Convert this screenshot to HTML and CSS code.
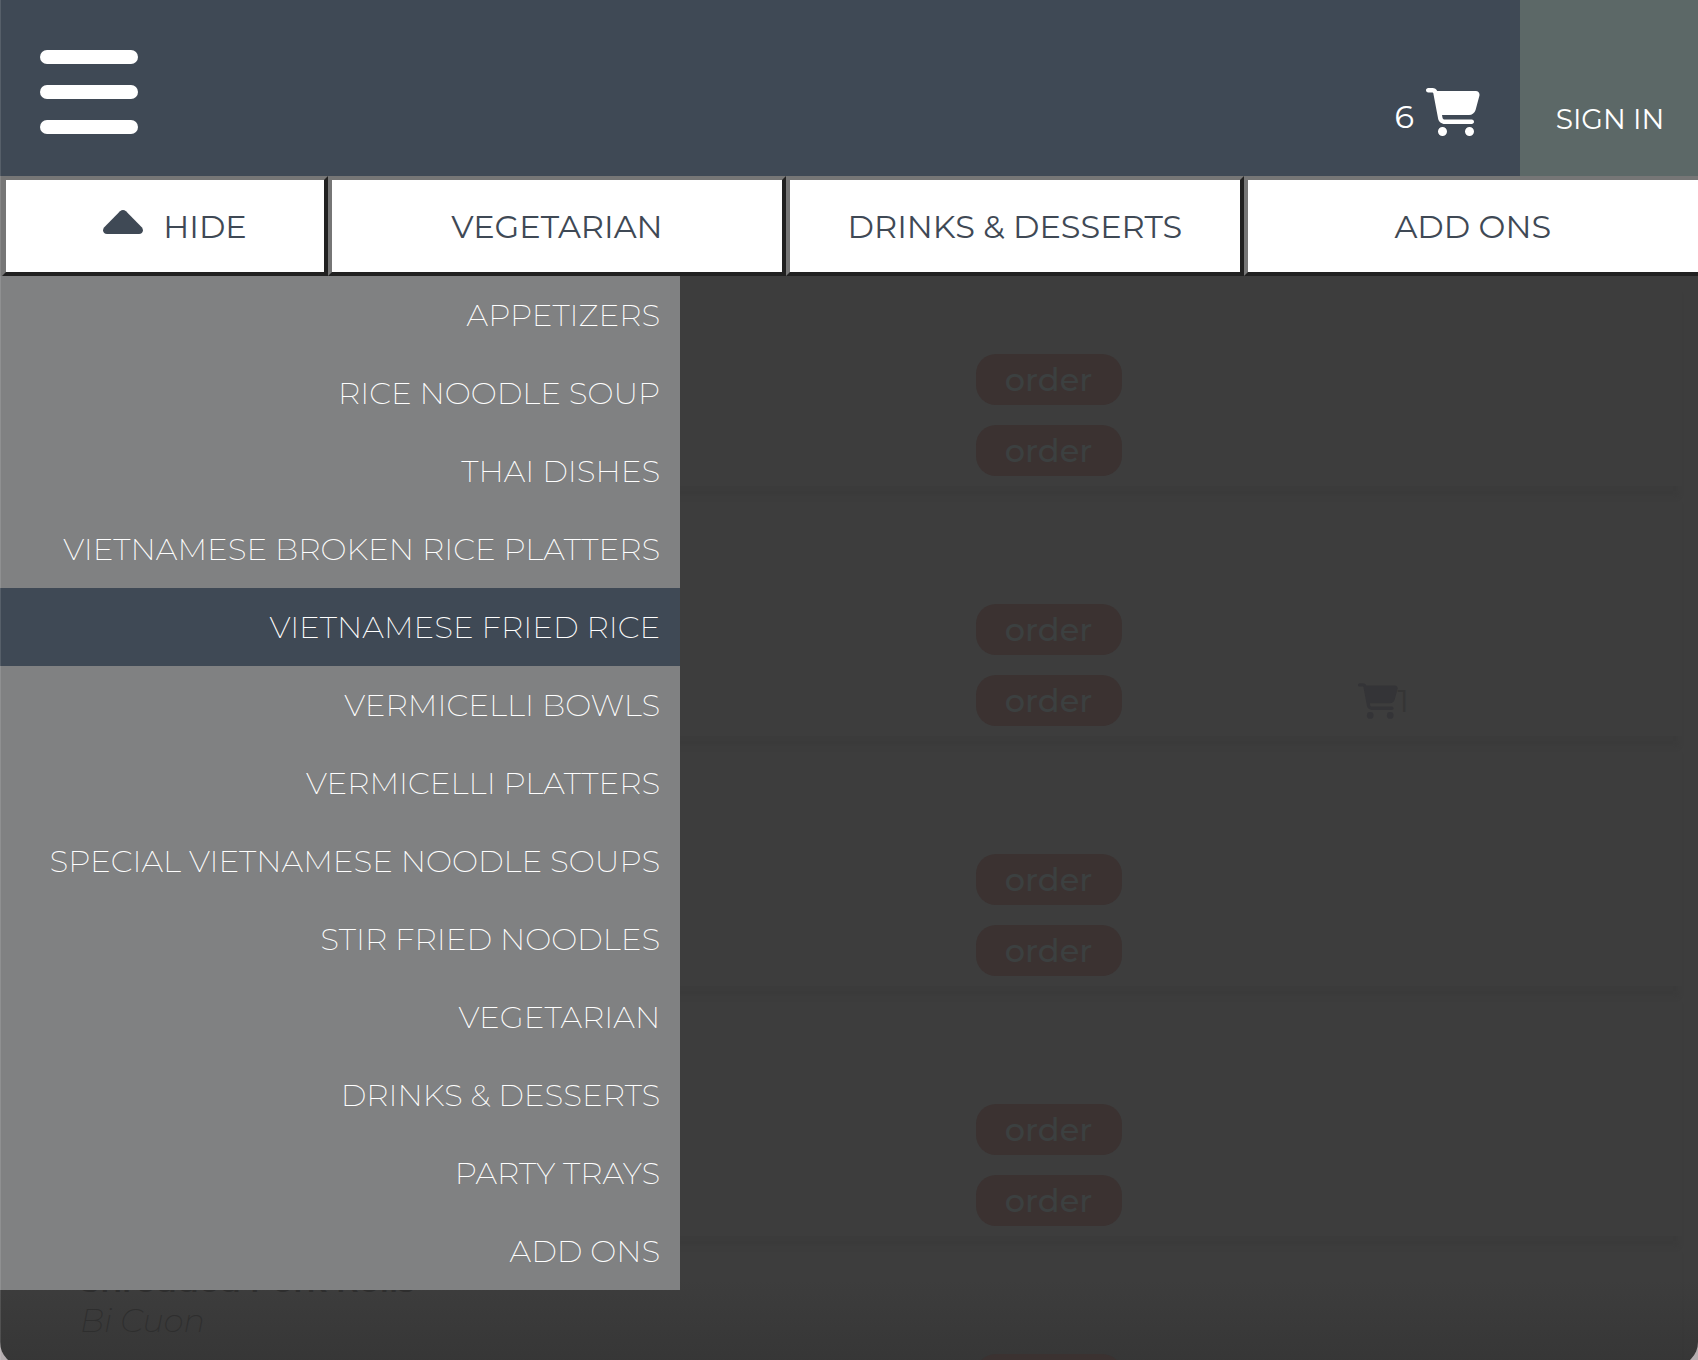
FILE: index.html
```html
<!DOCTYPE html>
<html lang="en">
<head>
<meta charset="utf-8">
<meta name="viewport" content="width=device-width, initial-scale=1">
<title>Menu</title>
<link rel="stylesheet" href="styles.css">
</head>
<body>
<svg class="sprite" aria-hidden="true">
  <symbol id="cart" viewBox="0 0 576 512"><path d="M0 24C0 10.7 10.7 0 24 0H69.5c22 0 41.5 12.8 50.6 32h411c26.3 0 45.5 25 38.6 50.4l-41 152.3c-8.5 31.4-37 53.3-69.5 53.3H170.7l5.4 28.5c2.2 11.3 12.1 19.5 23.6 19.5H488c13.3 0 24 10.7 24 24s-10.7 24-24 24H199.7c-34.6 0-64.3-24.6-70.7-58.5L77.4 54.5c-.7-3.8-4-6.5-7.9-6.5H24C10.7 48 0 37.3 0 24zM128 464a48 48 0 1 1 96 0 48 48 0 1 1 -96 0zm336-48a48 48 0 1 1 0 96 48 48 0 1 1 0-96z"/></symbol>
</svg>
<div class="page">
  <header class="topbar">
    <button class="burger" type="button" aria-label="Open navigation"><span></span><span></span><span></span></button>
    <a class="cart-link" href="#cart-page">6 <svg class="cart-icon"><use href="#cart"/></svg></a>
    <a class="sign-in" href="#sign-in">SIGN IN</a>
  </header>
  <nav class="tabs">
    <button class="tab tab-hide" type="button"><svg class="caret" viewBox="0 0 40 24"><path d="M17 1.300Q20 -1.200 23 1.300L39 17.500Q41 20.500 38.800 23Q37.800 24 36 24H4Q2.200 24 1.200 23Q-1 20.500 1 17.500Z"/></svg>HIDE</button>
    <a class="tab" href="#vegetarian">VEGETARIAN</a>
    <a class="tab" href="#drinks">DRINKS &amp; DESSERTS</a>
    <a class="tab" href="#add-ons">ADD ONS</a>
  </nav>
  <main class="content">
    <nav class="menu">
      <a href="#appetizers">APPETIZERS</a>
      <a href="#rice-noodle-soup">RICE NOODLE SOUP</a>
      <a href="#thai">THAI DISHES</a>
      <a href="#broken-rice">VIETNAMESE BROKEN RICE PLATTERS</a>
      <a class="active" href="#fried-rice">VIETNAMESE FRIED RICE</a>
      <a href="#bowls">VERMICELLI BOWLS</a>
      <a href="#platters">VERMICELLI PLATTERS</a>
      <a href="#special-soups">SPECIAL VIETNAMESE NOODLE SOUPS</a>
      <a href="#stir-fried">STIR FRIED NOODLES</a>
      <a href="#vegetarian">VEGETARIAN</a>
      <a href="#drinks">DRINKS &amp; DESSERTS</a>
      <a href="#party-trays">PARTY TRAYS</a>
      <a href="#add-ons">ADD ONS</a>
    </nav>
    <article class="dish">
      <div class="actions"><button type="button">order</button><button type="button">order</button></div>
    </article>
    <article class="dish">
      <div class="actions"><button type="button">order</button><button type="button">order</button></div>
      <div class="in-cart"><svg><use href="#cart"/></svg>1</div>
    </article>
    <article class="dish">
      <div class="actions"><button type="button">order</button><button type="button">order</button></div>
    </article>
    <article class="dish">
      <div class="actions"><button type="button">order</button><button type="button">order</button></div>
    </article>
    <article class="dish">
      <div class="name"><h2>Shredded Pork Rolls</h2><p>Bi Cuon</p></div>
      <div class="actions"><button type="button" aria-label="order"></button></div>
    </article>
  </main>
</div>
</body>
</html>
```

FILE: styles.css
```css
* { box-sizing: border-box; }

body {
  margin: 0;
  background: #b5aeb0;
  color: #fff;
  font: 400 32px/40px Montserrat, Inter, sans-serif;
}

a { color: inherit; text-decoration: none; }
button { font: inherit; color: inherit; border: 0; padding: 0; background: none; }
svg { fill: currentColor; }
.sprite { display: none; }

.page {
  position: relative;
  display: flex;
  flex-direction: column;
  height: 100vh;
  overflow: hidden;
}
.page::after {
  content: "";
  position: absolute;
  z-index: 2;
  inset: 0 auto 0 0;
  width: 1px;
  background: rgba(255, 255, 255, 0.12);
}

.topbar {
  display: flex;
  flex: 0 0 176px;
  background: #3f4955;
}

.burger {
  display: flex;
  flex-direction: column;
  gap: 21px;
  width: 98px;
  margin: 50px auto 0 40px;
}
.burger span { height: 14px; border-radius: 7px; background: #fff; }

.cart-link {
  display: flex;
  align-items: flex-end;
  gap: 12px;
  padding: 0 40px 40px 0;
  line-height: 38px;
}
.cart-icon { width: 54px; height: 48px; }

.sign-in {
  display: flex;
  align-items: flex-end;
  justify-content: center;
  width: 178px;
  padding: 0 0 36px 2px;
  background: #5c6867;
  font-size: 28px;
  line-height: 42px;
}

.tabs {
  display: flex;
  flex: 0 0 100px;
  padding-left: 2px;
  background: #767676;
  overflow: hidden;
}
.tab {
  display: flex;
  flex: 0 0 27%;
  align-items: center;
  justify-content: center;
  padding-top: 2px;
  border: 4px solid;
  border-color: #767676 #212121 #212121 #767676;
  background: #fff;
  color: #3f4955;
}
.tab-hide { flex-basis: 326px; gap: 20px; padding-left: 20px; }
.caret { width: 40px; height: 24px; margin-bottom: 10px; }

.content {
  position: relative;
  flex: 1 1 0;
  min-height: 0;
  margin-bottom: -6px;
  border-radius: 0 0 24px 24px;
  background: linear-gradient(#3d3d3d calc(100% - 86px), #363636);
  overflow: hidden;
}

.menu {
  position: absolute;
  z-index: 1;
  top: 0;
  left: 0;
  width: calc(40% + 1px);
  background: #808182;
  font-size: 31px;
  font-weight: 200;
  text-align: right;
}
.menu a { display: block; padding: 19px 20px; }
.menu .active { background: #3f4955; }

.dish {
  display: grid;
  grid-template-columns: 58% 146px 1fr;
  height: 250px;
  margin: 0 16px 0 0;
  box-shadow: 0 14px 4px -4px #3b3b3b;
}
.dish:first-of-type { height: 210px; }
.dish:first-of-type .actions { padding-top: 78px; }

.name { padding: 25px 0 0 80px; color: #2e2e2e; }
.name h2 { margin: 0; font: inherit; font-weight: 600; }
.name p { margin: 0; font-style: italic; font-weight: 200; }

.actions {
  grid-column: 2;
  display: flex;
  flex-direction: column;
  gap: 20px;
  padding-top: 118px;
}
.actions button {
  flex: 0 0 51px;
  border-radius: 20px;
  background: #3b3231;
  color: #3c4040;
  font-weight: 500;
}

.in-cart {
  display: flex;
  align-items: center;
  height: 40px;
  margin: 195px 0 0 236px;
  color: #353535;
}
.in-cart svg { width: 40px; height: 36px; color: #343437; }
```
